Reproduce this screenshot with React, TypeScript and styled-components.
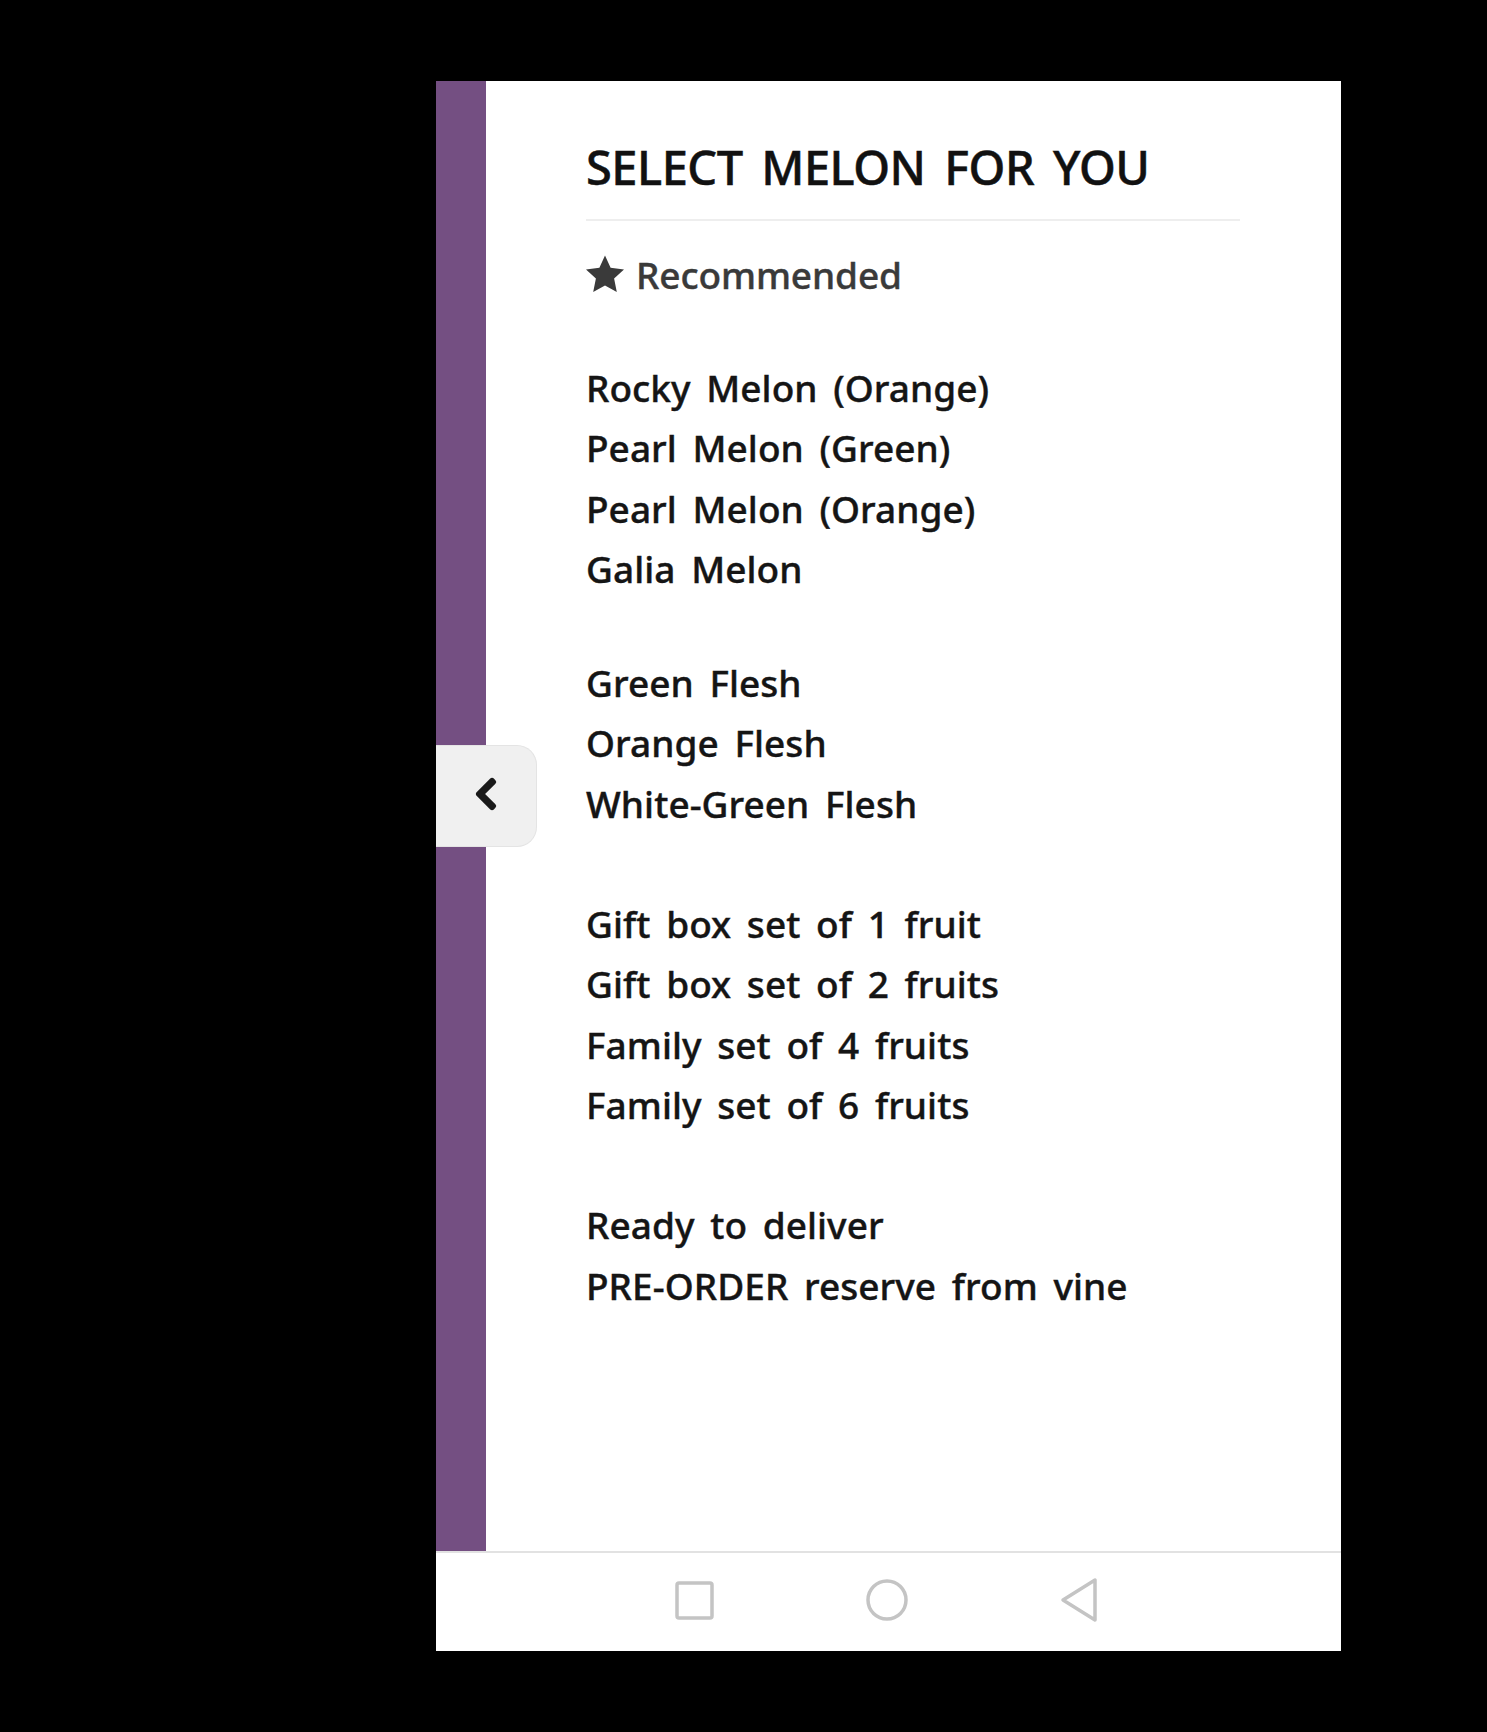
import React from 'react';
import styled, { createGlobalStyle } from 'styled-components';
import { FaChevronLeft } from 'react-icons/fa';

const GlobalStyle = createGlobalStyle`
  html, body {
    margin: 0;
    background: #000;
  }
  body {
    font-family: "Noto Sans", "Open Sans", sans-serif;
  }
`;

const groups: { top: number; items: string[] }[] = [
  { top: 31, items: ['Rocky Melon (Orange)', 'Pearl Melon (Green)', 'Pearl Melon (Orange)', 'Galia Melon'] },
  { top: 54, items: ['Green Flesh', 'Orange Flesh', 'White-Green Flesh'] },
  { top: 60, items: ['Gift box set of 1 fruit', 'Gift box set of 2 fruits', 'Family set of 4 fruits', 'Family set of 6 fruits'] },
  { top: 60, items: ['Ready to deliver', 'PRE-ORDER reserve from vine'] },
];

const App: React.FC = () => {
  return (
    <Page>
      <GlobalStyle />
      <Phone>
        <Body>
          <Sidebar />
          <Tab>
            <Chevron size={36} />
          </Tab>
          <Content>
            <Title>SELECT MELON FOR YOU</Title>
            <Recommended>
              <svg width="38" height="38" viewBox="0 0 38 38">
                <path
                  d="M19 0.5 L24.6 12.8 L38 14.4 L28.1 23.6 L30.8 37 L19 30.4 L7.2 37 L9.9 23.6 L0 14.4 L13.4 12.8 Z"
                  fill="#3a3a3a"
                />
              </svg>
              <span>Recommended</span>
            </Recommended>
            {groups.map((g) => (
              <Group key={g.items[0]} $top={g.top}>
                {g.items.map((item) => (
                  <Item key={item}>{item}</Item>
                ))}
              </Group>
            ))}
          </Content>
        </Body>
        <NavBar>
          <svg width="41" height="41" viewBox="0 0 41 41">
            <rect x="3" y="3" width="35" height="35" rx="2" fill="none" stroke="#c4c4c4" strokeWidth="3.5" />
          </svg>
          <svg width="44" height="44" viewBox="0 0 44 44">
            <circle cx="22" cy="22" r="19" fill="none" stroke="#c4c4c4" strokeWidth="3.5" />
          </svg>
          <svg width="41" height="46" viewBox="0 0 41 46">
            <path d="M36 3 L36 43 L4 23 Z" fill="none" stroke="#c4c4c4" strokeWidth="3.5" strokeLinejoin="round" />
          </svg>
        </NavBar>
      </Phone>
    </Page>
  );
};

export default App;

const Page = styled.div`
  min-height: 1732px;
  padding: 81px 146px 0 436px;
  box-sizing: border-box;
  background: #000;
`;

const Phone = styled.div`
  width: 905px;
  height: 1570px;
  background: #fff;
  display: flex;
  flex-direction: column;
`;

const Body = styled.div`
  position: relative;
  height: 1470px;
  display: flex;
`;

const Sidebar = styled.div`
  width: 50px;
  background: #744f82;
`;

const Tab = styled.div`
  position: absolute;
  left: 0;
  top: 664px;
  width: 101px;
  height: 102px;
  box-sizing: border-box;
  background: #f0f0f0;
  border: 1px solid #e4e4e4;
  border-left: none;
  border-radius: 0 20px 20px 0;
  display: flex;
  align-items: center;
  justify-content: center;
  padding-bottom: 4px;
  color: #1a1a1a;
`;

const Chevron = styled(FaChevronLeft)`
  stroke: #1a1a1a;
  stroke-width: 24px;
`;

const Content = styled.div`
  flex: 1;
  padding: 60px 101px 0 100px;
`;

const Title = styled.h1`
  margin: 0;
  height: 78px;
  line-height: 52px;
  font-size: 47px;
  font-weight: 500;
  letter-spacing: -0.5px;
  word-spacing: 7px;
  color: #111;
  -webkit-text-stroke: 0.5px #111;
  border-bottom: 2px solid #eee;
`;

const Recommended = styled.div`
  display: flex;
  align-items: center;
  gap: 12px;
  height: 106px;
  font-size: 37px;
  font-weight: 500;
  letter-spacing: -0.1px;
  color: #3a3a3a;
  -webkit-text-stroke: 0.4px #3a3a3a;
`;

const Group = styled.div<{ $top: number }>`
  margin-top: ${(p) => p.$top}px;
`;

const Item = styled.div`
  height: 60.3px;
  line-height: 60px;
  font-size: 37px;
  font-weight: 500;
  letter-spacing: 0.05px;
  word-spacing: 6px;
  color: #151515;
  -webkit-text-stroke: 0.4px #151515;
`;

const NavBar = styled.div`
  flex: 1;
  border-top: 2px solid #e2e2e2;
  display: flex;
  align-items: center;
  justify-content: center;
  gap: 150px;
  padding: 0 4px 4px 0;
`;
